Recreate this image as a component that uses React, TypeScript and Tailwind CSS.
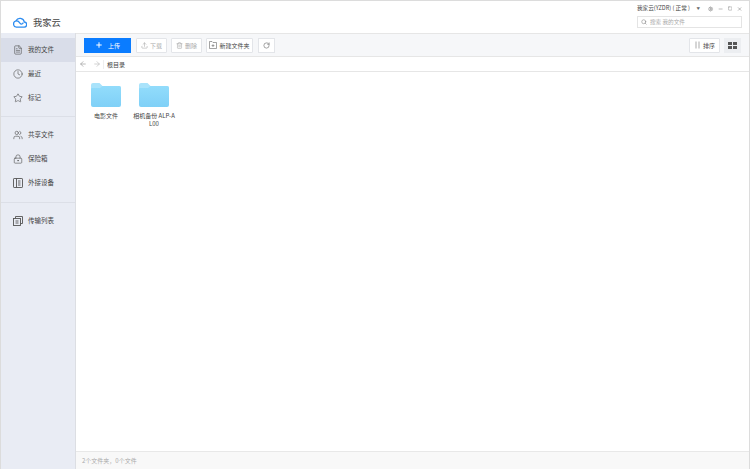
import React from 'react';
import { FileText, Clock, Star, Users, LockKeyhole, Plus, Upload, Trash2, RotateCw, ArrowLeft, ArrowRight, Search, Settings, Minus, Square, X } from 'lucide-react';

const font = { fontFamily: '"Noto Sans CJK SC", "Liberation Sans", sans-serif' };

function CloudLogo() {
  return (
    <svg width="14" height="12" viewBox="0 0 14 12" fill="none" stroke="#2d8cf0" strokeWidth="1.3">
      <path d="M3.4 11.2h7.4a2.6 2.6 0 0 0 .5-5.2A4.4 4.4 0 0 0 3 4.9a3.2 3.2 0 0 0 .4 6.3z" />
      <path d="M3.2 5c2.2-.4 3 1 3.8 2.2.8 1.1 2 1.5 3.4-.6" />
    </svg>
  );
}

function Folder() {
  return (
    <svg width="30" height="24" viewBox="0 0 30 24">
      <defs>
        <linearGradient id="folderFill" x1="0" y1="0" x2="0" y2="1">
          <stop offset="0" stopColor="#92dcfb" />
          <stop offset="1" stopColor="#7fd0f7" />
        </linearGradient>
      </defs>
      <path d="M0 2a2 2 0 0 1 2-2h6.5l3 3H28a2 2 0 0 1 2 2v2H0z" fill="#a9e3fb" />
      <path d="M0 6a1 1 0 0 1 1-1h8l2.500-2H28a2 2 0 0 1 2 2v17a2 2 0 0 1-2 2H2a2 2 0 0 1-2-2z" fill="url(#folderFill)" />
    </svg>
  );
}

function DeviceIcon() {
  return (
    <svg width="10" height="10" viewBox="0 0 10 10" fill="none" stroke="currentColor" strokeWidth="0.9">
      <rect x="0.5" y="0.5" width="9" height="9" rx="0.6" />
      <path d="M3.500 0.500v9M5 3h2.500M5 5h2.500M5 7h2.500" />
    </svg>
  );
}

function TransferIcon() {
  return (
    <svg width="10" height="10" viewBox="0 0 10 10" fill="none" stroke="currentColor" strokeWidth="0.9">
      <rect x="0.5" y="2.500" width="7" height="7" />
      <path d="M2.500 2.500v-2h7v7h-2M2.500 5h3M2.500 7h3" />
    </svg>
  );
}

function SortIcon() {
  return (
    <svg width="7" height="8" viewBox="0 0 7 8" fill="none" stroke="#888" strokeWidth="0.7">
      <path d="M2 0.500v7M5 0.500v7" />
    </svg>
  );
}

function GridIcon() {
  return (
    <svg width="9" height="7" viewBox="0 0 9 7" fill="#555">
      <rect x="0" y="0" width="4" height="3" />
      <rect x="5" y="0" width="4" height="3" />
      <rect x="0" y="4" width="4" height="3" />
      <rect x="5" y="4" width="4" height="3" />
    </svg>
  );
}

function NewFolderIcon() {
  return (
    <svg width="8" height="8" viewBox="0 0 8 8" fill="none" stroke="#666" strokeWidth="0.6">
      <path d="M0.500 7.500v-7h2.500l1 1h3.500v6zM4 3.200v2.800M2.600 4.600h2.800" />
    </svg>
  );
}

function NavItem({ icon, label, active }: { icon: React.ReactNode; label: string; active?: boolean }) {
  return (
    <div className={`flex h-[24px] items-center gap-[5px] pl-[12px] text-[6.5px] text-[#444] ${active ? 'bg-[#d9dde9]' : ''}`}>
      <span className="flex w-[10px] justify-center text-[#555]">{icon}</span>
      <span className="whitespace-nowrap">{label}</span>
    </div>
  );
}

function ToolButton({ icon, label, muted, width }: { icon: React.ReactNode; label: string; muted?: boolean; width: string }) {
  return (
    <div className={`flex h-[15px] items-center justify-center gap-[2px] whitespace-nowrap rounded-[1px] border border-[#e3e5e9] bg-white text-[6px] ${width} ${muted ? 'text-[#aaa]' : 'text-[#444]'}`}>
      {icon}
      <span>{label}</span>
    </div>
  );
}

export default function App() {
  return (
    <div className="flex h-[469px] w-[750px] flex-col overflow-hidden border-x border-t border-[#dcdcdc] bg-white" style={font}>
      <div className="flex h-[32px] shrink-0 items-start justify-between pr-[7px]">
        <div className="flex items-center gap-[6px] pl-[12px] pt-[14px]">
          <CloudLogo />
          <span className="text-[9.3px] leading-[14px] text-[#444]">我家云</span>
        </div>
        <div className="flex w-[105px] flex-col gap-[3px] pt-[3px]">
          <div className="flex h-[9px] items-center justify-end gap-[4.500px] whitespace-nowrap text-[#666]">
            <span className="text-[5.600px] text-[#444]">我家云(YZDR) ( 正常 )</span>
            <span className="ml-[2px] text-[3.500px]">▼</span>
            <Settings size={6} className="ml-[4px]" />
            <Minus size={6} />
            <Square size={5} />
            <X size={6} />
          </div>
          <div className="flex h-[12px] items-center gap-[3px] border border-[#e4e4e4] px-[3px] text-[5.600px] text-[#aaa]">
            <Search size={6} className="text-[#777]" />
            <span>搜索 我的文件</span>
          </div>
        </div>
      </div>
      <div className="flex min-h-0 flex-1">
        <aside className="flex w-[75px] shrink-0 flex-col border-r border-[#dcdee3] bg-[#e9ecf4] pt-[5px]">
          <NavItem active icon={<FileText size={10} strokeWidth={1.5} />} label="我的文件" />
          <NavItem icon={<Clock size={10} strokeWidth={1.5} />} label="最近" />
          <NavItem icon={<Star size={10} strokeWidth={1.5} />} label="标记" />
          <div className="my-[6px] border-t border-[#dcdfe7]" />
          <NavItem icon={<Users size={10} strokeWidth={1.5} />} label="共享文件" />
          <NavItem icon={<LockKeyhole size={10} strokeWidth={1.5} />} label="保险箱" />
          <NavItem icon={<DeviceIcon />} label="外接设备" />
          <div className="mb-[6px] mt-[7px] border-t border-[#dcdfe7]" />
          <NavItem icon={<TransferIcon />} label="传输列表" />
        </aside>
        <main className="flex min-w-0 flex-1 flex-col">
          <div className="flex h-[24px] shrink-0 items-center justify-between border-y border-[#e6e6e6] bg-[#f6f7f9] px-[8px]">
            <div className="flex items-center gap-[4px]">
              <div className="mr-[1px] flex h-[15px] w-[47px] items-center justify-center gap-[5px] bg-[#0a7cff] text-[6px] text-white">
                <Plus size={8} strokeWidth={3} />
                <span>上传</span>
              </div>
              <ToolButton muted width="w-[31px]" icon={<Upload size={7} />} label="下载" />
              <ToolButton muted width="w-[31px]" icon={<Trash2 size={7} />} label="删除" />
              <ToolButton width="w-[47px]" icon={<NewFolderIcon />} label="新建文件夹" />
              <div className="ml-[1px] flex h-[15px] w-[17px] items-center justify-center border border-[#e3e5e9] bg-white text-[#666]">
                <RotateCw size={7} />
              </div>
            </div>
            <div className="flex items-center gap-[4px]">
              <ToolButton width="w-[31px]" icon={<SortIcon />} label="排序" />
              <div className="flex h-[15px] w-[17px] items-center justify-center bg-[#eceef1]">
                <GridIcon />
              </div>
            </div>
          </div>
          <div className="flex h-[15px] shrink-0 items-center border-b border-[#e6e6e6] text-[#999]">
            <div className="flex w-[27px] items-center gap-[6px] pl-[3px]">
              <ArrowLeft size={8} />
              <ArrowRight size={8} className="text-[#bbb]" />
            </div>
            <span className="border-l border-[#eee] pl-[3px] text-[6px] text-[#444]">根目录</span>
          </div>
          <div className="flex flex-1 items-start gap-[8px] pl-[10px] pt-[11px]">
            <div className="flex w-[40px] flex-col items-center gap-[5px] text-center text-[6px] leading-[8px] text-[#444]">
              <Folder />
              <span>电影文件</span>
            </div>
            <div className="flex w-[40px] flex-col items-center gap-[5px] text-center text-[6px] leading-[8px] text-[#444]">
              <Folder />
              <span className="whitespace-nowrap">相机备份 ALP-A<br />L00</span>
            </div>
          </div>
          <div className="flex h-[18px] shrink-0 items-center border-t border-[#e8e8e8] bg-[#f8f8f8] pl-[6px] text-[6px] text-[#aaa]">
            2个文件夹，0个文件
          </div>
        </main>
      </div>
    </div>
  );
}
